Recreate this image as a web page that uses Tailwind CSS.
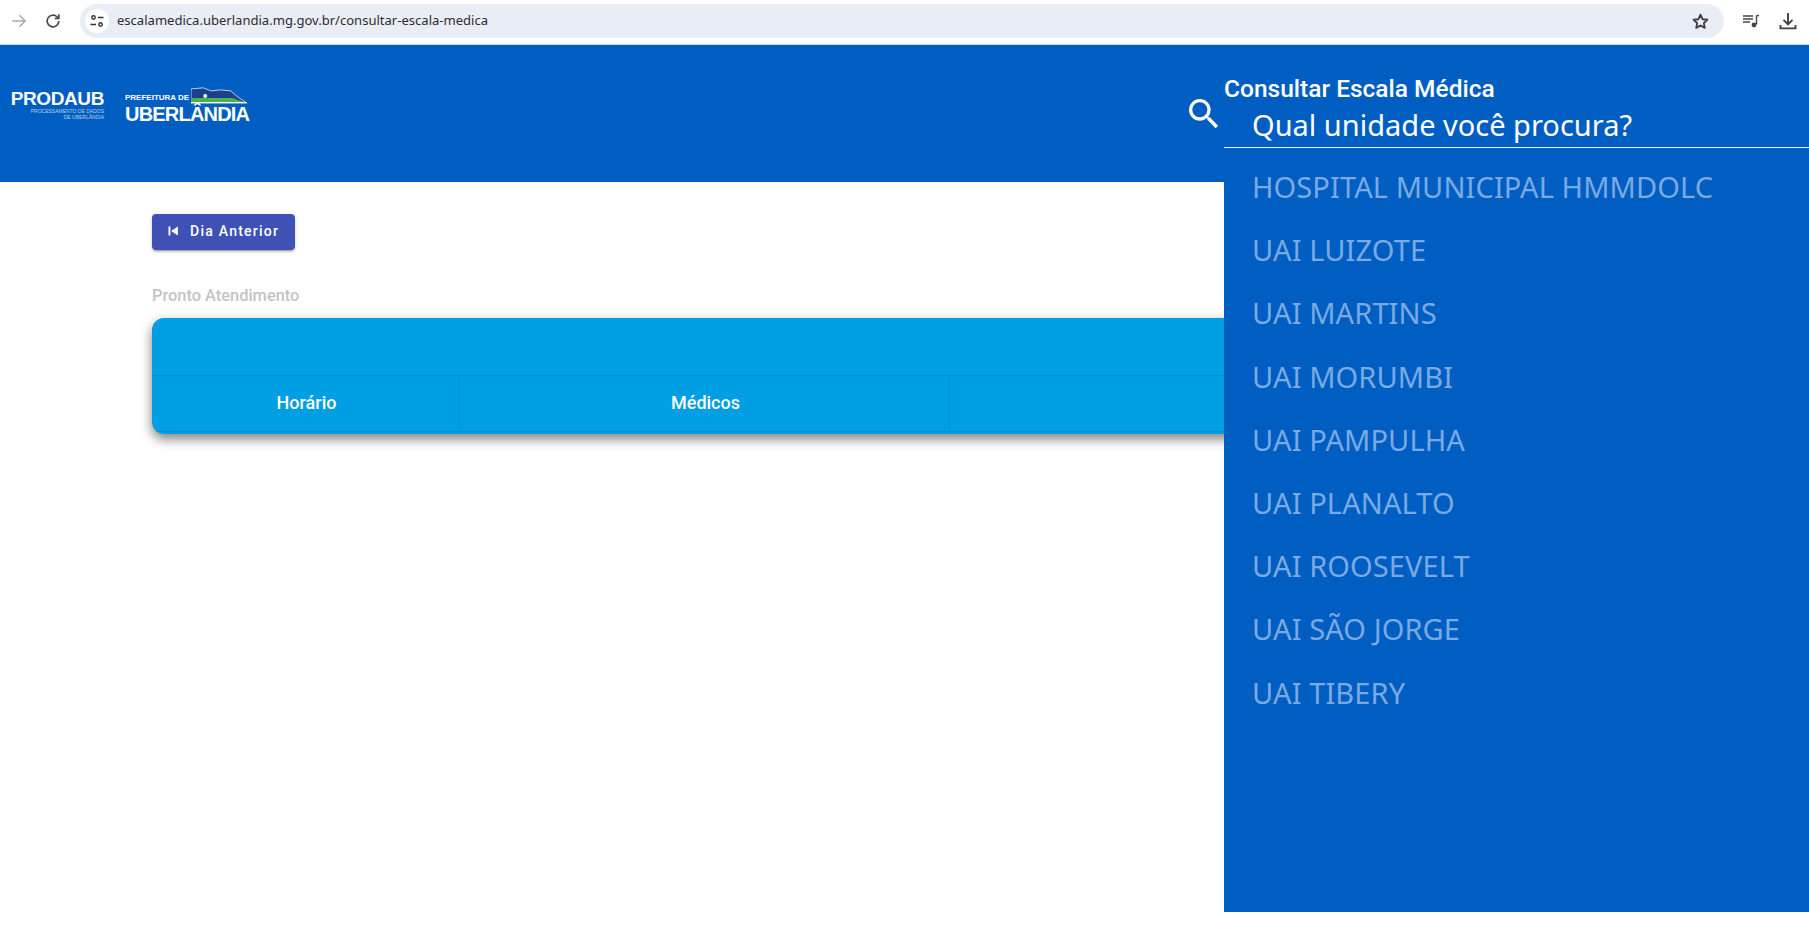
<!DOCTYPE html>
<html lang="pt-BR">
  <head>
    <meta charset="UTF-8" />
    <title>Consultar Escala Médica</title>
    <script src="https://cdn.jsdelivr.net/npm/@tailwindcss/browser@4"></script>
  </head>
  <body class="relative h-[935px] overflow-hidden bg-white font-['Roboto',sans-serif]">
    <!-- browser bar -->
    <div class="flex h-[45px] items-center border-b border-[#d5d7dc] bg-white pb-[2px]">
      <svg class="ml-[9px] h-5 w-5" viewBox="0 0 24 24" fill="none" stroke="#a9abae" stroke-width="1.8"><path d="M4 12h15M12.5 5l7 7-7 7" /></svg>
      <svg class="ml-[14px] h-5 w-5" viewBox="0 0 24 24" fill="none" stroke="#47494c" stroke-width="2"><path d="M19 12a7 7 0 1 1-2.2-5.1L19 9M19 4v5h-5" /></svg>
      <div class="ml-[17px] flex h-[34px] w-[1644px] items-center rounded-full bg-[#e9edf6]">
        <div class="ml-[5px] flex h-6 w-6 items-center justify-center rounded-full bg-white">
          <svg class="h-4 w-4" viewBox="0 0 16 16" fill="none" stroke="#303236" stroke-width="1.4"><circle cx="4.5" cy="4.5" r="1.7" /><path d="M9 4.5h5.5M1.5 11.5H7" /><circle cx="11.5" cy="11.5" r="1.7" /></svg>
        </div>
        <span class="ml-[8px] font-['Noto_Sans',sans-serif] text-[13.05px] text-[#2b2d30]">escalamedica.uberlandia.mg.gov.br/consultar-escala-medica</span>
        <svg class="mr-[14px] ml-auto h-[19px] w-[19px]" viewBox="0 0 24 24" fill="none" stroke="#3f4145" stroke-width="2.4" stroke-linejoin="round"><path d="m12 3.5 2.6 5.6 6.1.7-4.5 4.2 1.2 6L12 17l-5.4 3 1.2-6-4.5-4.2 6.1-.7z" /></svg>
      </div>
      <svg class="ml-[18px] h-[18px] w-[18px]" viewBox="0 0 18 18" fill="none" stroke="#44464a" stroke-width="1.4"><path d="M1 4h10M1 7h10M1 10h7M14.5 3.5H17M14.5 3.5v9" /><circle cx="12" cy="13" r="2.4" fill="#44464a" stroke="none" /></svg>
      <svg class="ml-[18px] h-[20px] w-[20px]" viewBox="0 0 20 20" fill="none" stroke="#3f4145" stroke-width="1.9"><path d="M10 2v11M5.5 8.8 10 13.3l4.5-4.5M2.5 14v3.4h15V14" /></svg>
    </div>

    <!-- header -->
    <header class="flex h-[137px] items-center justify-between bg-[#005ec2] pr-[585px] pl-[10px]">
      <div class="flex items-start gap-[21px] pb-[15px]">
        <div class="flex w-[94px] flex-col items-end text-white">
          <span class="font-['Liberation_Sans',sans-serif] text-[19px] leading-[17px] font-bold tracking-[-0.4px]">PRODAUB</span>
          <span class="mt-[1px] font-['Liberation_Sans',sans-serif] text-[5px] leading-[6px] text-white/70">PROCESSAMENTO DE DADOS</span>
          <span class="font-['Liberation_Sans',sans-serif] text-[5px] leading-[6px] text-white/70">DE UBERLÂNDIA</span>
        </div>
        <div class="-mt-[3px] flex w-[125px] flex-col text-white">
          <div class="flex items-end gap-[2px]">
            <span class="font-['Liberation_Sans',sans-serif] text-[8px] leading-[12px] font-bold whitespace-nowrap">PREFEITURA DE</span>
            <svg class="h-[17px] w-[56px] shrink-0" viewBox="0 0 55 15">
              <path d="M0 10V1l12-1 8 3 9-1 10 1 7 6 9 6H0z" fill="#1c3f8f" stroke="#fff" stroke-width=".7" />
              <path d="M0 10h41l14 5H0z" fill="#48b24b" />
              <path d="M0 14.4h55" stroke="#fff" stroke-width="1" />
              <circle cx="14" cy="8" r="2" fill="#fff" />
            </svg>
          </div>
          <span class="mt-[2px] font-['Liberation_Sans',sans-serif] text-[20px] leading-[17px] font-bold tracking-[-0.8px] whitespace-nowrap">UBERLÂNDIA</span>
        </div>
      </div>
      <svg class="h-[40px] w-[40px]" viewBox="0 0 24 24" fill="#fff"><path d="M15.5 14h-.79l-.28-.27A6.47 6.47 0 0 0 16 9.5 6.5 6.5 0 1 0 9.5 16c1.61 0 3.09-.59 4.23-1.57l.27.28v.79l5 4.99L20.49 19l-4.99-5zm-6 0C7.01 14 5 11.99 5 9.5S7.01 5 9.5 5 14 7.01 14 9.5 11.99 14 9.5 14z" /></svg>
    </header>

    <!-- content -->
    <main class="pt-[32px] pl-[152px]">
      <button class="flex h-[36px] w-[143px] items-center rounded-[4px] bg-[#3f51b5] pb-[2px] pl-[12px] text-[14px] font-medium tracking-[1.25px] text-white shadow-[0_3px_1px_-2px_rgba(0,0,0,0.2),0_2px_2px_0_rgba(0,0,0,0.14),0_1px_5px_0_rgba(0,0,0,0.12)]">
        <svg class="h-[18px] w-[18px]" viewBox="0 0 24 24" fill="#fff"><path d="M6 6h2.5v12H6zM9.5 12l9 6V6z" /></svg>
        <span class="ml-[8px]">Dia Anterior</span>
      </button>
      <p class="mt-[36px] text-[16.4px] leading-[20px] font-medium text-[#c4c4c4]">Pronto Atendimento</p>
      <div class="mt-[12px] h-[116px] w-[1400px] overflow-hidden rounded-[12px] bg-[#009ee2] shadow-[0_5px_12px_rgba(0,0,0,0.5)]">
        <div class="h-[58px] border-b border-[#0090d0]"></div>
        <div class="flex h-[56px] border-b border-[#0090d0] pb-[2px] text-[18px] font-medium text-white">
          <div class="flex w-[308px] items-center justify-center border-r border-[#0090d0] pl-[2px]">Horário</div>
          <div class="flex w-[490px] items-center justify-center border-r border-[#0090d0] pl-[2px]">Médicos</div>
          <div class="flex-1"></div>
        </div>
      </div>
    </main>

    <!-- unit panel lies over the page -->
    <aside class="absolute top-[45px] right-0 bottom-[23px] w-[585px] bg-[#005ec2]">
      <h2 class="mt-[31px] h-[26px] text-[24.5px] leading-[26px] font-medium text-white">Consultar Escala Médica</h2>
      <div class="flex h-[46px] items-center border-b border-white pl-[28px] font-['Noto_Sans',sans-serif] text-[29px] text-white">Qual unidade você procura?</div>
      <ul class="mt-[7px] pl-[28px] font-['Noto_Sans',sans-serif] text-[29px] leading-[63.2px] tracking-[0.1px] text-[#7aaae3]">
        <li>HOSPITAL MUNICIPAL HMMDOLC</li>
        <li>UAI LUIZOTE</li>
        <li>UAI MARTINS</li>
        <li>UAI MORUMBI</li>
        <li>UAI PAMPULHA</li>
        <li>UAI PLANALTO</li>
        <li>UAI ROOSEVELT</li>
        <li>UAI SÃO JORGE</li>
        <li>UAI TIBERY</li>
      </ul>
    </aside>
  </body>
</html>
